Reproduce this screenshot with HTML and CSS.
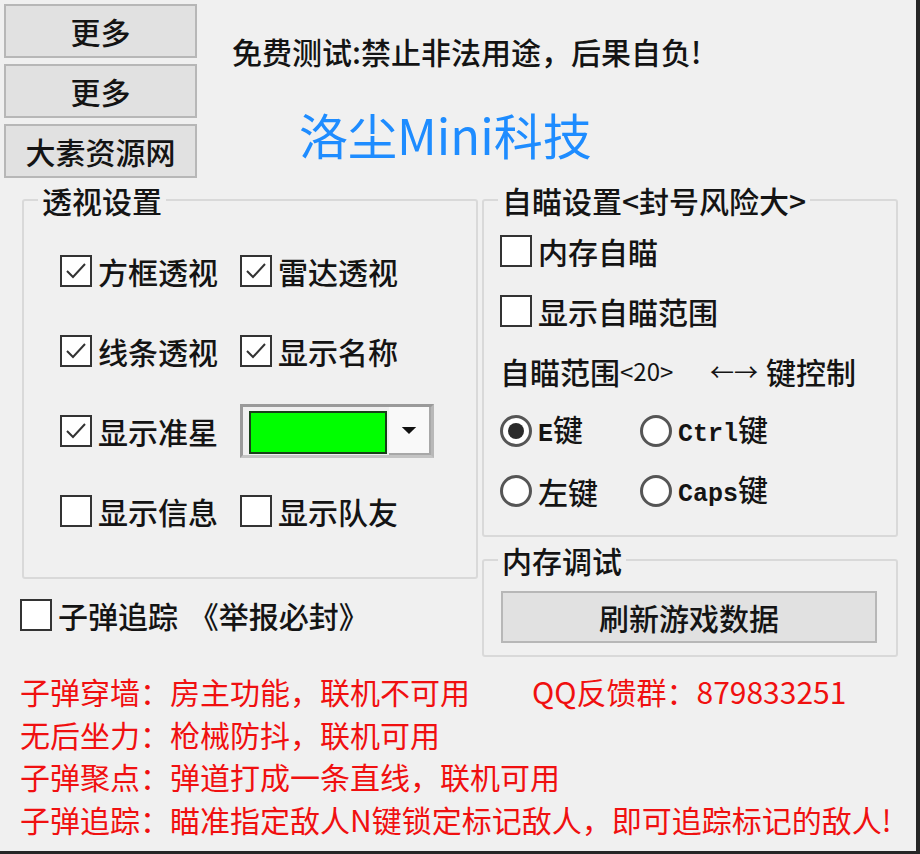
FILE: index.html
```html
<!DOCTYPE html>
<html lang="zh-CN">
<head>
<meta charset="utf-8">
<title>洛尘Mini科技</title>
<link rel="stylesheet" href="styles.css">
</head>
<body>
<div class="window">
  <div class="top">
    <div class="side">
      <button class="btn">更多</button>
      <button class="btn">更多</button>
      <button class="btn">大素资源网</button>
    </div>
    <div class="head">
      <p class="notice">免费测试:禁止非法用途，后果自负!</p>
      <h1 class="brand">洛尘Mini科技</h1>
    </div>
  </div>

  <div class="main">
    <div class="col-left">
      <fieldset class="group g-esp">
        <legend>透视设置</legend>
        <div class="esp-grid">
          <div class="esp-row">
            <label class="chk"><span class="box"><svg viewBox="0 0 28 28"><path d="M5 14 L11 20 L23 7"/></svg></span>方框透视</label>
            <label class="chk"><span class="box"><svg viewBox="0 0 28 28"><path d="M5 14 L11 20 L23 7"/></svg></span>雷达透视</label>
          </div>
          <div class="esp-row">
            <label class="chk"><span class="box"><svg viewBox="0 0 28 28"><path d="M5 14 L11 20 L23 7"/></svg></span>线条透视</label>
            <label class="chk"><span class="box"><svg viewBox="0 0 28 28"><path d="M5 14 L11 20 L23 7"/></svg></span>显示名称</label>
          </div>
          <div class="esp-row">
            <label class="chk"><span class="box"><svg viewBox="0 0 28 28"><path d="M5 14 L11 20 L23 7"/></svg></span>显示准星</label>
            <div class="combo">
              <div class="swatch-wrap"><span class="swatch"></span></div>
              <div class="drop"><svg viewBox="0 0 20 12"><path d="M2 2 H18 L10 10 Z"/></svg></div>
            </div>
          </div>
          <div class="esp-row">
            <label class="chk"><span class="box"></span>显示信息</label>
            <label class="chk"><span class="box"></span>显示队友</label>
          </div>
        </div>
      </fieldset>
      <label class="chk bullet"><span class="box"></span><span>子弹追踪 <span class="warn">《举报必封》</span></span></label>
    </div>

    <div class="col-right">
      <fieldset class="group g-aim">
        <legend>自瞄设置&lt;封号风险大&gt;</legend>
        <div class="aim-list">
          <label class="chk"><span class="box"></span>内存自瞄</label>
          <label class="chk"><span class="box"></span>显示自瞄范围</label>
          <div class="range"><span>自瞄范围</span><span class="num">&lt;20&gt;</span><span class="arrows">←→</span><span>键控制</span></div>
          <div class="radio-row">
            <label class="opt"><span class="radio on"></span><span><span class="en">E</span>键</span></label>
            <label class="opt"><span class="radio"></span><span><span class="en">Ctrl</span>键</span></label>
          </div>
          <div class="radio-row">
            <label class="opt"><span class="radio"></span><span>左键</span></label>
            <label class="opt"><span class="radio"></span><span><span class="en">Caps</span>键</span></label>
          </div>
        </div>
      </fieldset>
      <fieldset class="group g-mem">
        <legend>内存调试</legend>
        <div class="mem-body">
          <button class="btn refresh">刷新游戏数据</button>
        </div>
      </fieldset>
    </div>
  </div>

  <div class="notes">
    <p><span class="note-main">子弹穿墙：房主功能，联机不可用</span><span>QQ反馈群：879833251</span></p>
    <p>无后坐力：枪械防抖，联机可用</p>
    <p>子弹聚点：弹道打成一条直线，联机可用</p>
    <p>子弹追踪：瞄准指定敌人N键锁定标记敌人，即可追踪标记的敌人!</p>
  </div>
</div>
</body>
</html>
```
FILE: styles.css
```css
* {
  box-sizing: border-box;
}

body {
  margin: 0;
  background: #262626;
  font-family: "Noto Sans CJK SC", "Noto Sans", sans-serif;
  font-weight: 500;
  color: #141414;
}

.window {
  width: 916px;
  height: 851px;
  background: #f0f0f0;
  overflow: hidden;
}

/* header: button column + notice and brand */
.top {
  display: flex;
  height: 185px;
}

.side {
  display: flex;
  flex-direction: column;
  gap: 6px;
  padding: 4px 0 0 4px;
}

.btn {
  width: 193px;
  height: 54px;
  margin: 0;
  padding: 0;
  background: #e1e1e1;
  border: 2px solid #b7b7b7;
  font-family: "Noto Sans CJK SC", sans-serif;
  font-weight: 500;
  font-size: 30px;
  line-height: 1;
  color: #141414;
  display: flex;
  align-items: center;
  justify-content: center;
}

.head {
  display: flex;
  flex-direction: column;
}

.notice {
  margin: 36px 0 0 35px;
  font-size: 30px;
  line-height: 30px;
  white-space: nowrap;
}

.brand {
  margin: 42px 0 0 102px;
  font-size: 49px;
  line-height: 52px;
  font-weight: 400;
  color: #1e8cff;
  white-space: nowrap;
}

/* group boxes */
.main {
  display: flex;
  gap: 4px;
  padding-left: 20px;
}

.group {
  margin: 0;
  padding: 0;
  min-width: 0;
  border: 2px solid #d9d9d9;
  border-radius: 3px;
}

.group legend {
  margin-left: 14px;
  padding: 0 4px;
  font-size: 30px;
  line-height: 30px;
  white-space: nowrap;
}

.col-left {
  width: 458px;
}

.g-esp {
  margin-left: 2px;
  width: 456px;
}

.esp-grid {
  display: flex;
  flex-direction: column;
  gap: 48px;
  padding: 40px 0 50px 36px;
}

.esp-row {
  display: flex;
  align-items: center;
  height: 32px;
}

.esp-row > .chk {
  width: 180px;
}

/* checkbox */
.chk {
  display: flex;
  align-items: center;
  gap: 6px;
  height: 32px;
  font-size: 30px;
  line-height: 32px;
  white-space: nowrap;
}

.box {
  flex: none;
  width: 32px;
  height: 32px;
  border: 2px solid #333;
  background: #fff;
  display: flex;
}

.box svg {
  width: 28px;
  height: 28px;
  fill: none;
  stroke: #333;
  stroke-width: 2;
}

.bullet {
  margin-top: 20px;
}

.warn {
  margin-left: 4px;
}

/* colour picker combo */
.combo {
  flex: none;
  width: 194px;
  height: 54px;
  display: flex;
  border: 3px solid #9a9a9a;
  border-right-color: #b8b8b8;
  border-bottom-color: #c4c4c4;
  background: #f7f7f7;
}

.swatch-wrap {
  width: 146px;
  padding: 4px 0 1px 6px;
  background: #f0f0f0;
}

.swatch {
  display: block;
  width: 138px;
  height: 100%;
  background: #00ff00;
  border: 2px solid #184018;
}

.drop {
  flex: 1;
  display: flex;
  align-items: center;
  justify-content: center;
  background: #f9f9f9;
  border-right: 2px solid #a8a8a8;
  border-bottom: 2px solid #a8a8a8;
}

.drop svg {
  width: 18px;
  height: 11px;
  fill: #111;
}

/* aim settings */
.col-right {
  width: 416px;
}

.g-aim {
  width: 416px;
}

.aim-list {
  display: flex;
  flex-direction: column;
  gap: 28px;
  padding: 20px 0 28px 16px;
}

.range {
  display: flex;
  align-items: center;
  height: 32px;
  font-size: 30px;
  line-height: 32px;
  white-space: nowrap;
}

.range .num {
  font-size: 24px;
  font-weight: 400;
  width: 60px;
}

.range .arrows {
  margin-left: 30px;
  font-size: 24px;
  font-weight: 400;
  width: 56px;
}

.radio-row {
  display: flex;
  height: 32px;
}

.opt {
  width: 140px;
  display: flex;
  align-items: center;
  gap: 6px;
  font-size: 30px;
  line-height: 32px;
  white-space: nowrap;
}

.radio {
  flex: none;
  width: 32px;
  height: 32px;
  border: 3px solid #555;
  border-radius: 50%;
  background: #fff;
  display: flex;
  align-items: center;
  justify-content: center;
}

.radio.on::after {
  content: "";
  width: 16px;
  height: 16px;
  border-radius: 50%;
  background: #2a2a2a;
}

.en {
  font-family: "Liberation Mono", monospace;
  font-weight: 700;
  font-size: 25px;
}

/* memory debug */
.g-mem {
  margin-top: 8px;
  width: 416px;
}

.mem-body {
  padding: 16px 19px 12px 17px;
}

.refresh {
  width: 376px;
  height: 52px;
}

/* red notes */
.notes {
  margin-top: 13px;
  padding-left: 20px;
  color: #f01010;
  font-size: 30px;
  font-weight: 400;
  line-height: 42.5px;
  white-space: nowrap;
}

.notes p {
  margin: 0;
}

.note-main {
  display: inline-block;
  width: 512px;
}
```
